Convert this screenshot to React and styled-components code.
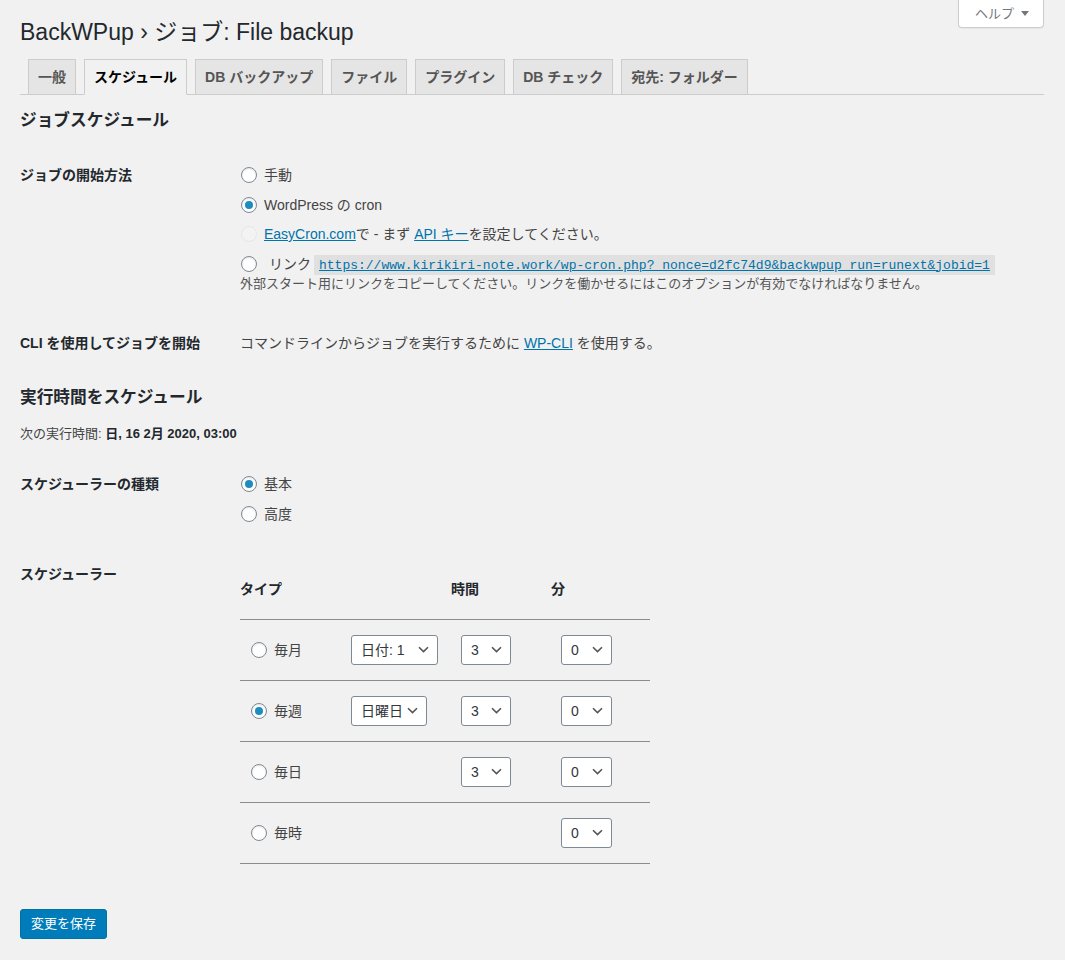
import React from 'react';
import styled, { createGlobalStyle } from 'styled-components';

const GlobalStyle = createGlobalStyle`
  html, body { margin: 0; padding: 0; background: #f1f1f1; }
  body {
    font-family: "Liberation Sans", "Noto Sans CJK JP", sans-serif;
    color: #444;
    font-size: 13px;
  }
  * { box-sizing: border-box; }
`;

const Wrap = styled.div`
  padding: 0 21px 40px 20px;
`;

const HelpTab = styled.button`
  float: right;
  height: 28px;
  display: flex;
  align-items: center;
  gap: 7px;
  padding: 0 14px 0 16px;
  background: #fff;
  border: 1px solid #ccc;
  border-top: none;
  border-radius: 0 0 4px 4px;
  box-shadow: 0 1px 1px rgba(0, 0, 0, 0.04);
  color: #72777c;
  font-family: inherit;
  font-size: 13px;
  line-height: 20px;
`;

const Title = styled.h1`
  margin: 0;
  padding-top: 17px;
  font-size: 23px;
  font-weight: 400;
  line-height: 30px;
  color: #23282d;
`;

const TabBar = styled.nav`
  display: flex;
  align-items: flex-end;
  padding-top: 12px;
  border-bottom: 1px solid #ccc;
`;

const Tab = styled.a`
  margin-left: 8px;
  padding: 5px 9px;
  border: 1px solid #ccc;
  border-bottom: ${(p) => (p.$active ? '1px solid #f1f1f1' : 'none')};
  margin-bottom: ${(p) => (p.$active ? '-1px' : '0')};
  background: ${(p) => (p.$active ? '#f1f1f1' : '#e5e5e5')};
  color: ${(p) => (p.$active ? '#000' : '#555')};
  font-size: 14px;
  font-weight: 700;
  line-height: 24px;
  white-space: nowrap;
`;

const SectionTitle = styled.h3`
  margin: ${(p) => p.$mt}px 0 0;
  font-size: 16.7px;
  line-height: 23px;
  font-weight: 700;
  color: #23282d;
`;

const NextRun = styled.p`
  margin: 14.5px 0 0;
  font-size: 13px;
  line-height: 20px;
  color: #444;
  b { font-weight: 700; color: #23282d; }
`;

const FormRow = styled.div`
  display: grid;
  grid-template-columns: 220px 1fr;
  margin-top: ${(p) => p.$mt}px;
`;

const RowLabel = styled.div`
  font-size: 14px;
  font-weight: 700;
  line-height: 20px;
  color: #23282d;
`;

const RowField = styled.div`
  font-size: 14px;
  line-height: 20px;
  color: #444;
`;

const RadioList = styled.div`
  display: flex;
  flex-direction: column;
  gap: ${(p) => p.$gap}px;
`;

const Option = styled.label`
  display: flex;
  align-items: center;
  gap: 7px;
  min-height: 20px;
  white-space: nowrap;
`;

const RadioCircle = styled.span`
  flex: none;
  width: 16px;
  height: 16px;
  margin-left: 1px;
  border-radius: 50%;
  border: 1px solid ${(p) => (p.$disabled ? '#e6e6e6' : '#7e8993')};
  background: ${(p) => (p.$disabled ? '#f3f3f3' : '#fff')};
  box-shadow: ${(p) => (p.$disabled ? 'none' : 'inset 0 1px 2px rgba(0, 0, 0, 0.1)')};
  display: flex;
  align-items: center;
  justify-content: center;
  &::after {
    content: '';
    width: 8px;
    height: 8px;
    border-radius: 50%;
    background: #1e8cbe;
    display: ${(p) => (p.$checked ? 'block' : 'none')};
  }
`;

const Link = styled.a`
  color: #0073aa;
  text-decoration: underline;
`;

const LinkLabel = styled.span`
  padding-left: 5px;
`;

const Code = styled.code`
  margin-left: 3px;
  padding: 3px 5px 2px;
  background: rgba(0, 0, 0, 0.07);
  font-family: "Liberation Mono", monospace;
  font-size: 13px;
  line-height: 14px;
`;

const Description = styled.div`
  font-size: 13px;
  line-height: 20px;
  color: #555;
`;

const SchedTable = styled.div`
  width: 410px;
`;

const SchedRow = styled.div`
  display: grid;
  grid-template-columns: 101px 110px 100px 99px;
  align-items: ${(p) => (p.$head ? 'start' : 'center')};
  height: ${(p) => (p.$head ? 56 : 61)}px;
  padding-top: ${(p) => (p.$head ? 15 : 0)}px;
  border-bottom: 1px solid #8c8c8c;
`;

const HeadCell = styled.div`
  grid-column: span ${(p) => p.$span || 1};
  font-size: 14px;
  font-weight: 700;
  line-height: 20px;
  color: #23282d;
`;

const Cell = styled.div`
  padding-left: 10px;
  display: flex;
  align-items: center;
`;

const SelectBox = styled.div`
  height: 30px;
  display: flex;
  align-items: center;
  justify-content: space-between;
  padding: 0 8px 0 9px;
  background: #fff;
  border: 1px solid #7e8993;
  border-radius: 3px;
  font-size: 14px;
  color: #32373c;
  white-space: nowrap;
`;

const PrimaryButton = styled.button`
  margin-top: 45px;
  height: 30px;
  padding: 0 10px;
  background: #007cba;
  border: 1px solid #0071a1;
  border-radius: 3px;
  color: #fff;
  font-family: inherit;
  font-size: 13px;
  line-height: 28px;
`;

const Chevron = () => (
  <svg width="11" height="7" viewBox="0 0 11 7" aria-hidden="true">
    <polyline points="1,1.2 5.5,5.6 10,1.2" fill="none" stroke="#555" strokeWidth="1.6" />
  </svg>
);

const Triangle = () => (
  <svg width="8" height="5" viewBox="0 0 8 5" aria-hidden="true">
    <polygon points="0,0 8,0 4,5" fill="#72777c" />
  </svg>
);

const Select = ({ value, width }) => (
  <SelectBox style={{ width }}>
    <span>{value}</span>
    <Chevron />
  </SelectBox>
);

const Radio = ({ checked, disabled, children }) => (
  <Option>
    <RadioCircle $checked={checked} $disabled={disabled} />
    {children}
  </Option>
);

const tabs = ['一般', 'スケジュール', 'DB バックアップ', 'ファイル', 'プラグイン', 'DB チェック', '宛先: フォルダー'];

const schedRows = [
  { label: '毎月', checked: false, day: { value: '日付: 1', width: 87 }, hour: true },
  { label: '毎週', checked: true, day: { value: '日曜日', width: 76 }, hour: true },
  { label: '毎日', checked: false, day: null, hour: true },
  { label: '毎時', checked: false, day: null, hour: false },
];

export default function App() {
  return (
    <>
      <GlobalStyle />
      <Wrap>
        <HelpTab>
          <span>ヘルプ</span>
          <Triangle />
        </HelpTab>
        <Title>BackWPup › ジョブ: File backup</Title>
        <TabBar>
          {tabs.map((t) => (
            <Tab key={t} $active={t === 'スケジュール'}>
              {t}
            </Tab>
          ))}
        </TabBar>

        <SectionTitle $mt={13.5}>ジョブスケジュール</SectionTitle>

        <FormRow $mt={33.5}>
          <RowLabel>ジョブの開始方法</RowLabel>
          <RowField>
            <RadioList $gap={9.5}>
              <Radio>手動</Radio>
              <Radio checked>WordPress の cron</Radio>
              <Radio disabled>
                <span>
                  <Link>EasyCron.com</Link>で - まず <Link>API キー</Link>を設定してください。
                </span>
              </Radio>
              <div>
                <Radio>
                  <LinkLabel>
                    リンク
                    <Code>
                      <Link>https://www.kirikiri-note.work/wp-cron.php?_nonce=d2fc74d9&amp;backwpup_run=runext&amp;jobid=1</Link>
                    </Code>
                  </LinkLabel>
                </Radio>
                <Description>
                  外部スタート用にリンクをコピーしてください。リンクを働かせるにはこのオプションが有効でなければなりません。
                </Description>
              </div>
            </RadioList>
          </RowField>
        </FormRow>

        <FormRow $mt={39}>
          <RowLabel>CLI を使用してジョブを開始</RowLabel>
          <RowField>
            コマンドラインからジョブを実行するために <Link>WP-CLI</Link> を使用する。
          </RowField>
        </FormRow>

        <SectionTitle $mt={33.5}>実行時間をスケジュール</SectionTitle>
        <NextRun>
          次の実行時間: <b>日, 16 2月 2020, 03:00</b>
        </NextRun>

        <FormRow $mt={30}>
          <RowLabel>スケジューラーの種類</RowLabel>
          <RowField>
            <RadioList $gap={10}>
              <Radio checked>基本</Radio>
              <Radio>高度</Radio>
            </RadioList>
          </RowField>
        </FormRow>

        <FormRow $mt={40}>
          <RowLabel>スケジューラー</RowLabel>
          <RowField>
            <SchedTable>
              <SchedRow $head>
                <HeadCell $span={2}>タイプ</HeadCell>
                <HeadCell>時間</HeadCell>
                <HeadCell>分</HeadCell>
              </SchedRow>
              {schedRows.map((r) => (
                <SchedRow key={r.label}>
                  <Cell>
                    <Radio checked={r.checked}>{r.label}</Radio>
                  </Cell>
                  <Cell>{r.day && <Select value={r.day.value} width={r.day.width} />}</Cell>
                  <Cell>{r.hour && <Select value="3" width={50} />}</Cell>
                  <Cell>
                    <Select value="0" width={51} />
                  </Cell>
                </SchedRow>
              ))}
            </SchedTable>
          </RowField>
        </FormRow>

        <PrimaryButton>変更を保存</PrimaryButton>
      </Wrap>
    </>
  );
}
